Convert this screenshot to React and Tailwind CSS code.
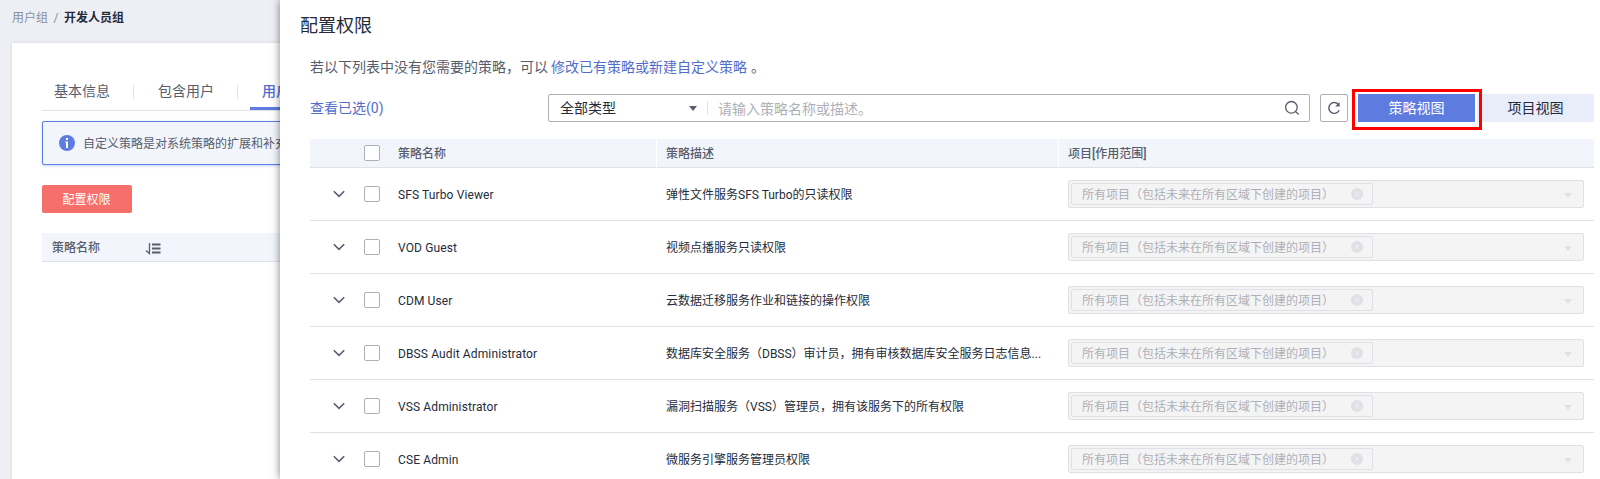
const rows = [
  ["SFS Turbo Viewer", "弹性文件服务SFS Turbo的只读权限"],
  ["VOD Guest", "视频点播服务只读权限"],
  ["CDM User", "云数据迁移服务作业和链接的操作权限"],
  ["DBSS Audit Administrator", "数据库安全服务（DBSS）审计员，拥有审核数据库安全服务日志信息..."],
  ["VSS Administrator", "漏洞扫描服务（VSS）管理员，拥有该服务下的所有权限"],
  ["CSE Admin", "微服务引擎服务管理员权限"],
];

function Checkbox() {
  return <span className="block h-4 w-4 rounded-[2px] border border-[#adb0b8] bg-white" />;
}

function InfoIcon() {
  return (
    <svg className="h-4 w-4 shrink-0" viewBox="0 0 16 16">
      <circle cx="8" cy="8" r="8" fill="#5e7ce0" />
      <rect x="7" y="3" width="2" height="2" fill="#fff" />
      <path d="M6 6.5h3V13H7V7.5H6z" fill="#fff" />
    </svg>
  );
}

function SortIcon() {
  return (
    <svg className="mt-0.5 h-[13px] w-4 shrink-0" viewBox="0 0 16 13" fill="none" stroke="#575d6c">
      <path d="M4.5 1v10.5L1 8.5" strokeWidth="1.3" />
      <path d="M7 2.5h8.5M7 6.5h8.5M7 10.5h8.5" strokeWidth="2" />
    </svg>
  );
}

function SearchIcon() {
  return (
    <svg className="h-4 w-4" viewBox="0 0 16 16" fill="none" stroke="#575d6c" strokeWidth="1.3">
      <circle cx="7.4" cy="7.3" r="5.8" />
      <path d="M11.4 11.6l3.4 3" />
    </svg>
  );
}

function RefreshIcon() {
  return (
    <svg className="h-[14px] w-[14px]" viewBox="0 0 14 14" fill="none" stroke="#575d6c" strokeWidth="1.4">
      <path d="M11.6 3.8A5.4 5.4 0 1 0 12.1 9.2" />
      <path d="M12.6 1v4.4H8.2z" fill="#575d6c" stroke="none" />
    </svg>
  );
}

function ProjectSelect() {
  return (
    <div className="flex h-7 w-[516px] items-center rounded-[2px] border border-[#dfe1e6] bg-[#f4f4f4] pl-0.5 pr-[11px]">
      <div className="flex h-[22px] w-[302px] items-center justify-between rounded-[2px] border border-[#dfe1e6] pl-2.5 pr-[9px] text-[#adb0b8]">
        <span className="pt-0.5">所有项目（包括未来在所有区域下创建的项目）</span>
        <svg className="h-3 w-3 shrink-0" viewBox="0 0 12 12">
          <circle cx="6" cy="6" r="6" fill="#dfe1e6" />
          <path d="M3.8 3.8l4.4 4.4M8.2 3.8l-4.4 4.4" stroke="#f4f4f4" strokeWidth="0.7" />
        </svg>
      </div>
      <svg className="ml-auto mt-0.5 h-[5px] w-2" viewBox="0 0 8 5">
        <path d="M0 0h8L4 5z" fill="#dfe1e6" />
      </svg>
    </div>
  );
}

function Background() {
  return (
    <div className="w-[280px] shrink-0 overflow-hidden whitespace-nowrap">
      <div className="flex h-[43px] items-center pb-2 pl-3 text-xs">
        <span className="text-[#8a8e99]">用户组</span>
        <span className="w-4 text-center text-[#8a8e99]">/</span>
        <span className="font-bold text-[#252b3a]">开发人员组</span>
      </div>
      <div className="ml-3 h-[436px] w-[600px] bg-white pl-[30px] pt-[29px] shadow-[0_0_3px_rgba(0,0,0,0.12)]">
        <div className="flex h-[39px] border-b border-[#dfe1e6] text-sm text-[#575d6c]">
          <div className="flex h-[37px] w-[91px] items-center pl-3">基本信息</div>
          <div className="mt-[13px] h-[14px] w-px bg-[#dfe1e6]" />
          <div className="flex h-[37px] w-[103px] items-center pl-6">包含用户</div>
          <div className="mt-[13px] h-[14px] w-px bg-[#dfe1e6]" />
          <div className="ml-3 flex h-[38px] w-[110px] items-center border-b-[3px] border-[#5e7ce0] pl-3 pt-0.5 font-medium text-[#526ecc]">
            用户组权限
          </div>
        </div>
        <div className="mt-2.5 flex h-11 items-center gap-2 rounded-[2px] border border-[#5e7ce0] bg-[#f2f5fc] pl-4 text-xs text-[#575d6c] shadow-[0_1px_3px_rgba(94,124,224,0.35)]">
          <InfoIcon />
          <span className="pt-0.5">自定义策略是对系统策略的扩展和补充</span>
        </div>
        <button className="mt-5 flex h-7 w-[90px] items-center justify-center rounded-[2px] bg-[#f66f6a] pr-px pt-0.5 text-xs text-white">
          配置权限
        </button>
        <div className="mt-5 flex h-[29px] items-center border-b border-[#dfe1e6] bg-[#f2f5fc] pl-2.5 text-xs font-medium text-[#575d6c]">
          <span className="w-[93px] pt-0.5">策略名称</span>
          <SortIcon />
        </div>
      </div>
    </div>
  );
}

function Toolbar() {
  return (
    <div className="flex h-7 items-center text-sm">
      <span className="w-[238px] text-[#526ecc]">查看已选(0)</span>
      <div className="flex h-7 w-[762px] items-center rounded-[2px] border border-[#adb0b8] pl-[11px] pr-[9px]">
        <span className="w-[129px] text-[#252b3a]">全部类型</span>
        <svg className="h-[5px] w-2" viewBox="0 0 8 5">
          <path d="M0 0h8L4 5z" fill="#575d6c" />
        </svg>
        <span className="ml-[10px] h-[14px] w-px bg-[#dfe1e6]" />
        <span className="ml-[10px] mr-auto pt-0.5 text-[#adb0b8]">请输入策略名称或描述。</span>
        <SearchIcon />
      </div>
      <button className="ml-2.5 flex h-7 w-7 items-center justify-center rounded-[2px] border border-[#adb0b8]">
        <RefreshIcon />
      </button>
      <div className="relative ml-2.5 flex">
        <button className="mr-0.5 h-7 w-[117px] bg-[#5e7ce0] text-white">策略视图</button>
        <button className="h-7 w-[117px] rounded-r-[2px] bg-[#e9edfa] text-[#252b3a]">项目视图</button>
        <span className="absolute -left-1.5 -top-[5px] h-[41px] w-[130px] border-[3px] border-[#fe0000]" />
      </div>
    </div>
  );
}

function Drawer() {
  return (
    <div className="relative h-[479px] w-[1320px] shrink-0 bg-white shadow-[0_0_8px_rgba(0,0,0,0.5)]">
      <div className="h-[479px] overflow-hidden whitespace-nowrap pl-[30px]">
        <h1 className="-ml-2.5 flex h-[50px] items-center pt-0.5 text-lg text-[#252b3a]">配置权限</h1>
        <p className="flex h-[34px] items-center text-sm text-[#575d6c]">
          <span>若以下列表中没有您需要的策略，可以</span>
          <a className="ml-[3px] mr-1 text-[#526ecc]">修改已有策略或新建自定义策略</a>
          <span>。</span>
        </p>
        <div className="mt-2.5">
          <Toolbar />
        </div>
        <div className="mt-[17px] w-[1284px] text-xs">
          <div className="flex h-[29px] font-medium text-[#575d6c]">
            <div className="mr-px flex w-[346px] border-b border-[#dfe1e6] bg-[#f2f5fc]">
              <div className="w-[54px] pt-1.5" />
              <div className="w-[34px] pt-1.5">
                <Checkbox />
              </div>
              <div className="flex items-center pt-px">策略名称</div>
            </div>
            <div className="mr-px flex w-[401px] items-center border-b border-[#dfe1e6] bg-[#f2f5fc] pl-[9px] pt-px">策略描述</div>
            <div className="flex flex-1 items-center border-b border-[#dfe1e6] bg-[#f2f5fc] pl-[9px] pt-px">项目[作用范围]</div>
          </div>
          {rows.map(([name, desc]) => (
            <div key={name} className="flex h-[53px] items-center border-b border-[#dfe1e6] text-[#252b3a]">
              <div className="w-[54px] pl-[22.5px]">
                <svg className="h-2 w-3" viewBox="0 0 12 8" fill="none" stroke="#575d6c" strokeWidth="1.6">
                  <path d="M0.8 1.2L6 6.3l5.2-5.1" />
                </svg>
              </div>
              <div className="w-[34px]">
                <Checkbox />
              </div>
              <div className="w-[268px] pt-0.5 tracking-[0.12px]">{name}</div>
              <div className="w-[402px] pt-0.5">{desc}</div>
              <ProjectSelect />
            </div>
          ))}
        </div>
      </div>
    </div>
  );
}

export default function App() {
  return (
    <div className="flex h-[479px] w-[1600px] overflow-hidden bg-[#eeeff5] font-[Roboto,'Noto_Sans_CJK_SC',sans-serif]">
      <Background />
      <Drawer />
    </div>
  );
}
